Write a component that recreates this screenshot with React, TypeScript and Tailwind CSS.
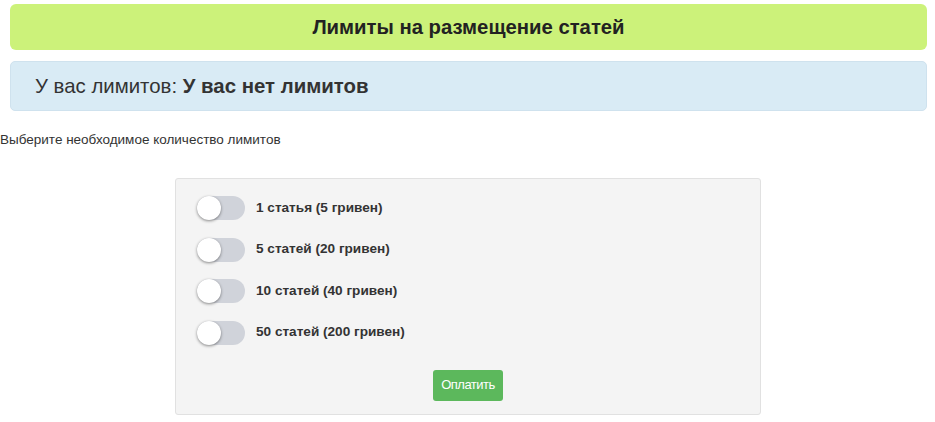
const options = [
  "1 статья (5 гривен)",
  "5 статей (20 гривен)",
  "10 статей (40 гривен)",
  "50 статей (200 гривен)",
]

function Toggle() {
  return (
    <div className="relative w-[48px] h-[24px] rounded-full bg-[#d0d3da] shrink-0">
      <div className="absolute left-0 top-0 w-[24px] h-[24px] rounded-full bg-white shadow-[0_1px_3px_rgba(0,0,0,0.45)]" />
    </div>
  )
}

export default function App() {
  return (
    <div className="w-[935px] h-[422px] bg-white text-[#333] font-['Liberation_Sans',Arial,sans-serif]">
      <div className="pt-[4px] pl-[10px] pr-[8px]">
        <div className="h-[46px] rounded-[6px] bg-[#ccf27a] flex items-center justify-center text-[20.3px] font-bold text-[#222]">
          Лимиты на размещение статей
        </div>
        <div className="mt-[11px] h-[50px] rounded-[5px] bg-[#d9ebf5] border border-[#cfe2ee] flex items-center pl-[24px] text-[20.4px]">
          <span>У вас лимитов:&nbsp;</span>
          <b>У вас нет лимитов</b>
        </div>
      </div>
      <p className="mt-[20px] text-[13.5px] leading-[17px]">Выберите необходимое количество лимитов</p>
      <div className="ml-[175px] mt-[30px] w-[586px] h-[237px] bg-[#f4f4f4] border border-[#e1e1e1] rounded-[3px] pt-[17px] pl-[21px]">
        <div className="flex flex-col gap-[17.5px]">
          {options.map((o) => (
            <label key={o} className="flex items-center gap-[11px] h-[24px]">
              <Toggle />
              <span className="text-[13.6px] font-bold text-[#333]">{o}</span>
            </label>
          ))}
        </div>
        <div className="flex justify-center mt-[25px] pr-[21px]">
          <button className="w-[70px] h-[31px] rounded-[3px] bg-[#5cb85c] text-white text-[13px] tracking-[-0.5px]">
            Оплатить
          </button>
        </div>
      </div>
    </div>
  )
}
